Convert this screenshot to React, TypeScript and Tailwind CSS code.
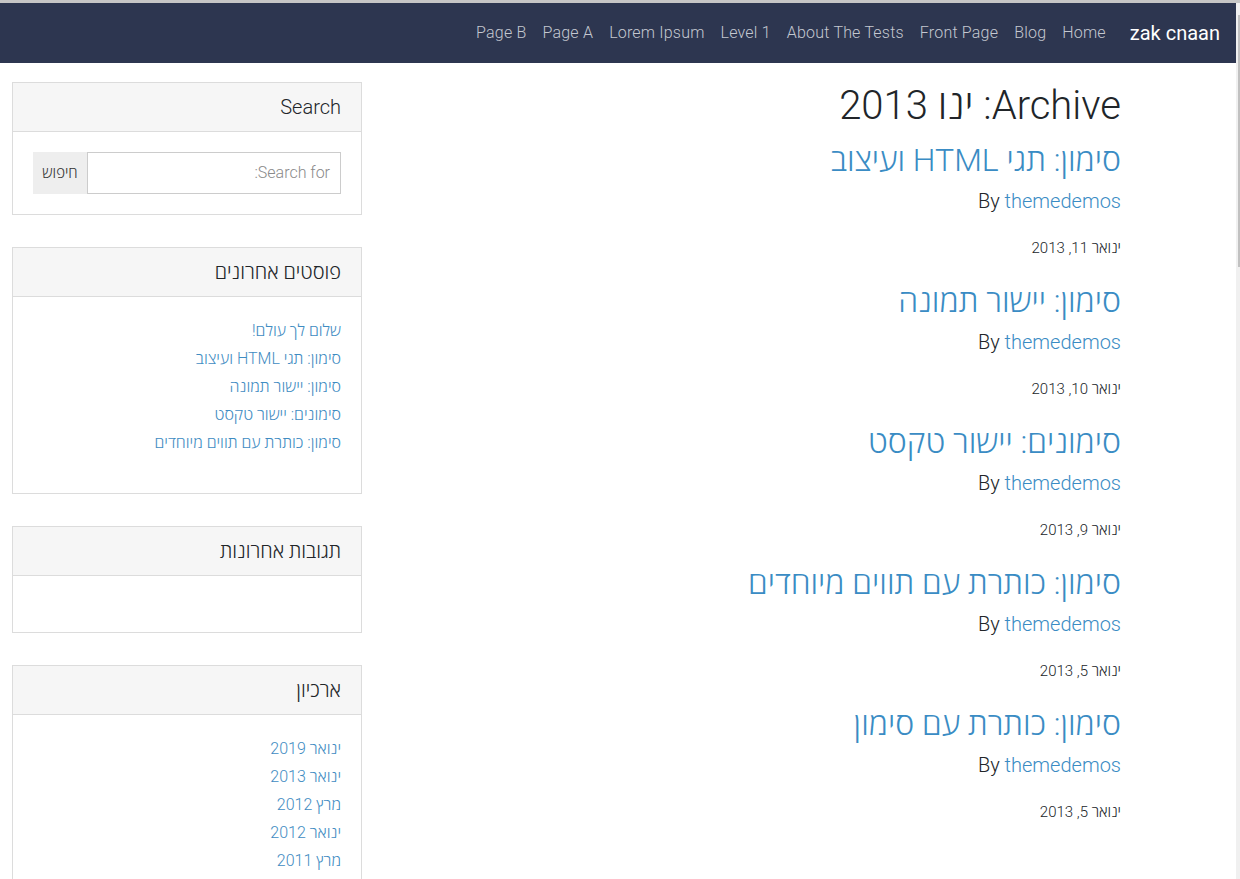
import React from "react";

const navLinks = ["Home", "Blog", "Front Page", "About The Tests", "Level 1", "Lorem Ipsum", "Page A", "Page B"];

const posts = [
  { title: "סימון: תגי HTML ועיצוב", date: "ינואר 11, 2013" },
  { title: "סימון: יישור תמונה", date: "ינואר 10, 2013" },
  { title: "סימונים: יישור טקסט", date: "ינואר 9, 2013" },
  { title: "סימון: כותרת עם תווים מיוחדים", date: "ינואר 5, 2013" },
  { title: "סימון: כותרת עם סימון", date: "ינואר 5, 2013" },
];

const recent = [
  "שלום לך עולם!",
  "סימון: תגי HTML ועיצוב",
  "סימון: יישור תמונה",
  "סימונים: יישור טקסט",
  "סימון: כותרת עם תווים מיוחדים",
];

const archives = ["ינואר 2019", "ינואר 2013", "מרץ 2012", "ינואר 2012", "מרץ 2011", "ינואר 2011"];

function Widget({ title, children }: { title: string; children?: React.ReactNode }) {
  return (
    <section className="border border-[#dcdcdc] bg-white">
      <div className="bg-[#f6f6f6] border-b border-[#dcdcdc] px-5 py-3 text-[20px] leading-[24px] text-[#212529]">
        {title}
      </div>
      <div className="p-5">{children}</div>
    </section>
  );
}

function LinkList({ items }: { items: string[] }) {
  return (
    <ul className="mb-4">
      {items.map((t, i) => (
        <li key={i} className="text-[16px] leading-[28px] text-[#3f8cc2]">
          {t}
        </li>
      ))}
    </ul>
  );
}

export default function App() {
  return (
    <div
      className="h-[879px] overflow-hidden bg-white flex flex-col"
      style={{ fontFamily: 'Roboto, "Open Sans", "DejaVu Sans", sans-serif' }}
    >
      <div className="h-[3px] bg-[#c6c6c6] shrink-0" />
      <div className="flex flex-1 min-h-0">
        <div className="flex-1 min-w-0 flex flex-col" dir="rtl">
          <nav className="h-[60px] shrink-0 bg-[#2d3650] flex items-center pr-4">
            <div className="text-white text-[20px] ml-4 font-normal">zak cnaan</div>
            <ul className="flex items-center">
              {navLinks.map((l) => (
                <li key={l} className="px-2 text-[16px] tracking-[0.2px] text-[#c4c8d0] font-light">
                  {l}
                </li>
              ))}
            </ul>
          </nav>
          <div className="flex justify-between pt-[19px]">
            <main className="pr-[115px] font-light text-[#212529]">
              <h1 className="text-[40px] leading-[48px] mb-[12px]">Archive: ינו 2013</h1>
              {posts.map((p, i) => (
                <article key={i} className="mb-[23px]">
                  <h2 className="text-[32px] leading-[36px] text-[#3a8cc4]">{p.title}</h2>
                  <div className="mt-[8px] text-[20px] leading-[30px]">
                    By <span className="text-[#3a8cc4]">themedemos</span>
                  </div>
                  <div className="mt-[20px] text-[15px] leading-[24px]">{p.date}</div>
                </article>
              ))}
            </main>
            <aside className="w-[350px] ml-[12px] flex flex-col gap-8 font-light">
              <Widget title="Search">
                <div className="flex h-[42px]">
                  <div className="flex-1 border border-[#cccccc] px-[10px] flex items-center text-[16px] text-[#8a8a8a]">
                    Search for:
                  </div>
                  <div className="w-[54px] bg-[#eeeeee] flex items-center justify-center text-[15px] text-[#333]">
                    חיפוש
                  </div>
                </div>
              </Widget>
              <Widget title="פוסטים אחרונים">
                <LinkList items={recent} />
              </Widget>
              <Widget title="תגובות אחרונות">
                <ul className="mb-4" />
              </Widget>
              <Widget title="ארכיון">
                <LinkList items={archives} />
              </Widget>
            </aside>
          </div>
        </div>
        <div className="w-[4px] shrink-0 bg-[#f0f0f0] flex justify-end">
          <div className="w-[2px] h-[252px] mt-[12px] bg-[#c1c1c1]" />
        </div>
      </div>
    </div>
  );
}
